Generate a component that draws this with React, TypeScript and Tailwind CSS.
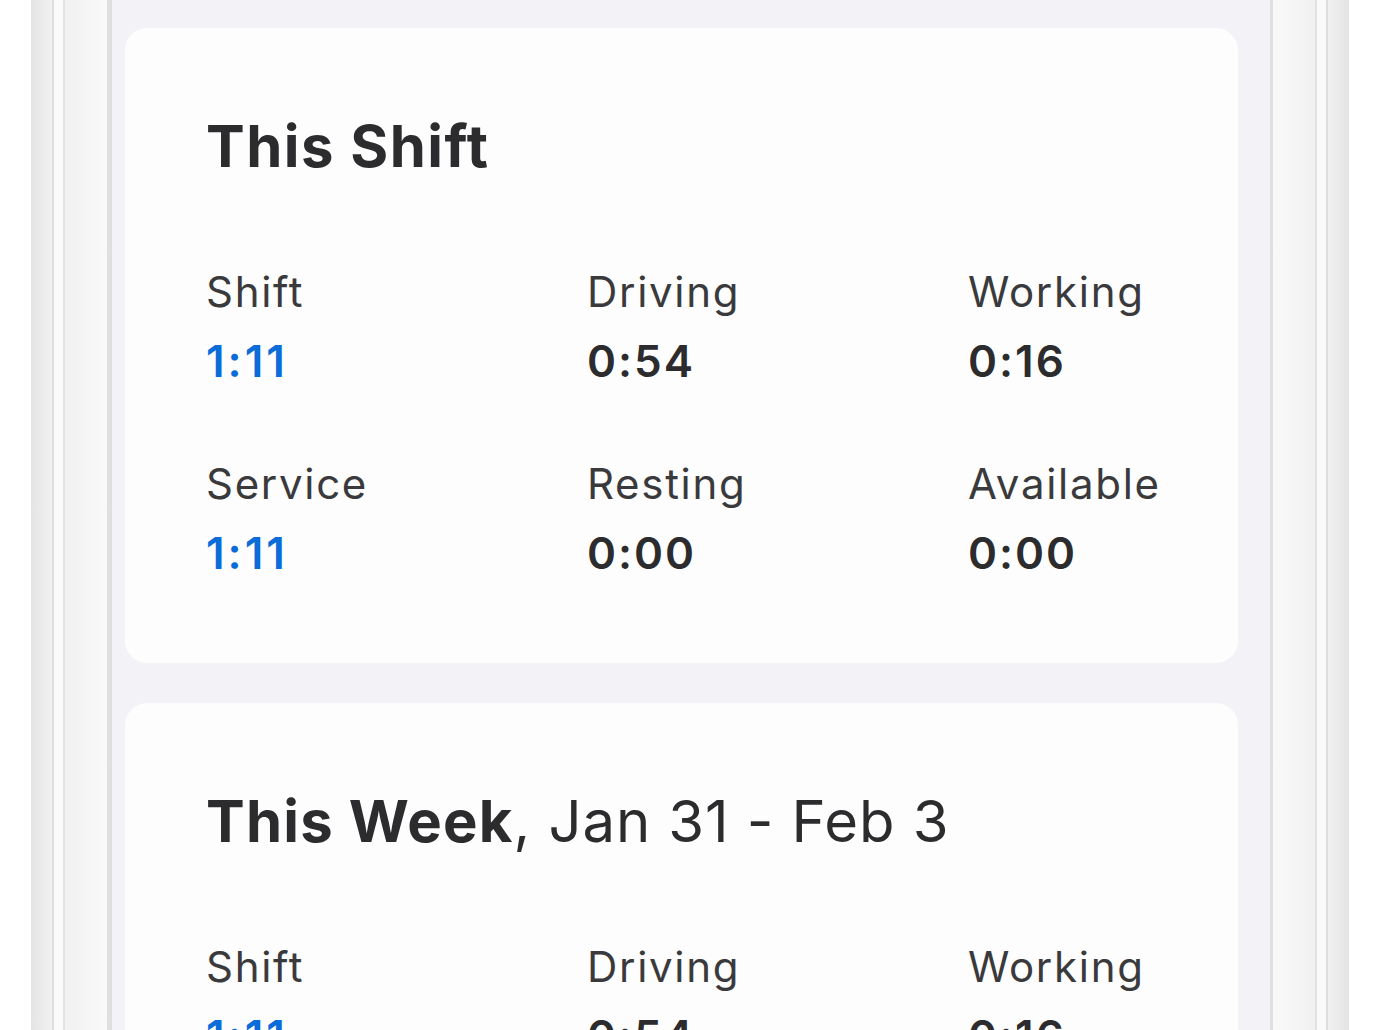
import React from "react";

type Stat = { label: string; value: string; blue?: boolean };

const rows: Stat[][] = [
  [
    { label: "Shift", value: "1:11", blue: true },
    { label: "Driving", value: "0:54" },
    { label: "Working", value: "0:16" },
  ],
  [
    { label: "Service", value: "1:11", blue: true },
    { label: "Resting", value: "0:00" },
    { label: "Available", value: "0:00" },
  ],
];

function StatGrid() {
  return (
    <div className="flex flex-col gap-[80px]">
      {rows.map((row, i) => (
        <div key={i} className="flex">
          {row.map((s, j) => (
            <div
              key={s.label}
              className={(j < 2 ? "w-[381px] shrink-0 " : "flex-1 min-w-0 ") + "flex flex-col gap-[26px]"}
            >
              <div className="text-[42px] leading-[42px] text-[#3a3a3c] tracking-[1.7px] whitespace-nowrap">{s.label}</div>
              <div
                className={
                  "text-[44px] leading-[44px] font-semibold whitespace-nowrap " +
                  (s.blue ? "text-[#0a6cd9] tracking-[3px]" : "text-[#2c2c2e] tracking-[2px]")
                }
              >
                {s.value}
              </div>
            </div>
          ))}
        </div>
      ))}
    </div>
  );
}

function Card({ children }: { children: React.ReactNode }) {
  return (
    <div className="ml-[13px] mr-[32px] rounded-[22px] bg-[#fdfdfd] pl-[81px] pr-[20px] pt-[89px] pb-[88px]">
      {children}
    </div>
  );
}

export default function App() {
  return (
    <div
      className="flex h-[1030px] w-[1388px] overflow-hidden bg-white"
      style={{ fontFamily: "Inter, 'Noto Sans', sans-serif" }}
    >
      <div className="w-[31px] shrink-0 bg-white" />
      <div className="w-[21px] shrink-0 bg-gradient-to-r from-[#e4e4e4] to-[#f1f1f1]" />
      <div className="w-[2px] shrink-0 bg-[#dedede]" />
      <div className="w-[9px] shrink-0 bg-[#fafafa]" />
      <div className="w-[2px] shrink-0 bg-[#e2e2e2]" />
      <div className="w-[42px] shrink-0 bg-gradient-to-r from-[#f1f1f1] to-[#f9f9f9]" />
      <div className="w-[5px] shrink-0 bg-[#dfdfdf]" />
      <div className="w-[1158px] shrink-0 bg-[#f2f2f7] pt-[28px] flex flex-col gap-[40px]">
        <Card>
          <div className="text-[58px] leading-[58px] font-bold text-[#2c2c2e] tracking-[1.5px] whitespace-nowrap">This Shift</div>
          <div className="mt-[96px]">
            <StatGrid />
          </div>
        </Card>
        <Card>
          <div className="text-[58px] leading-[58px] text-[#2c2c2e] tracking-[1.2px] whitespace-nowrap">
            <span className="font-bold">This Week</span>
            <span className="tracking-[0.9px]">, Jan 31 - Feb 3</span>
          </div>
          <div className="mt-[96px]">
            <StatGrid />
          </div>
        </Card>
      </div>
      <div className="w-[3px] shrink-0 bg-[#dfdfdf]" />
      <div className="w-[42px] shrink-0 bg-gradient-to-r from-[#f9f9f9] to-[#f1f1f1]" />
      <div className="w-[2px] shrink-0 bg-[#e2e2e2]" />
      <div className="w-[9px] shrink-0 bg-[#fafafa]" />
      <div className="w-[2px] shrink-0 bg-[#dedede]" />
      <div className="w-[21px] shrink-0 bg-gradient-to-r from-[#f1f1f1] to-[#e4e4e4]" />
      <div className="flex-1 bg-white" />
    </div>
  );
}
